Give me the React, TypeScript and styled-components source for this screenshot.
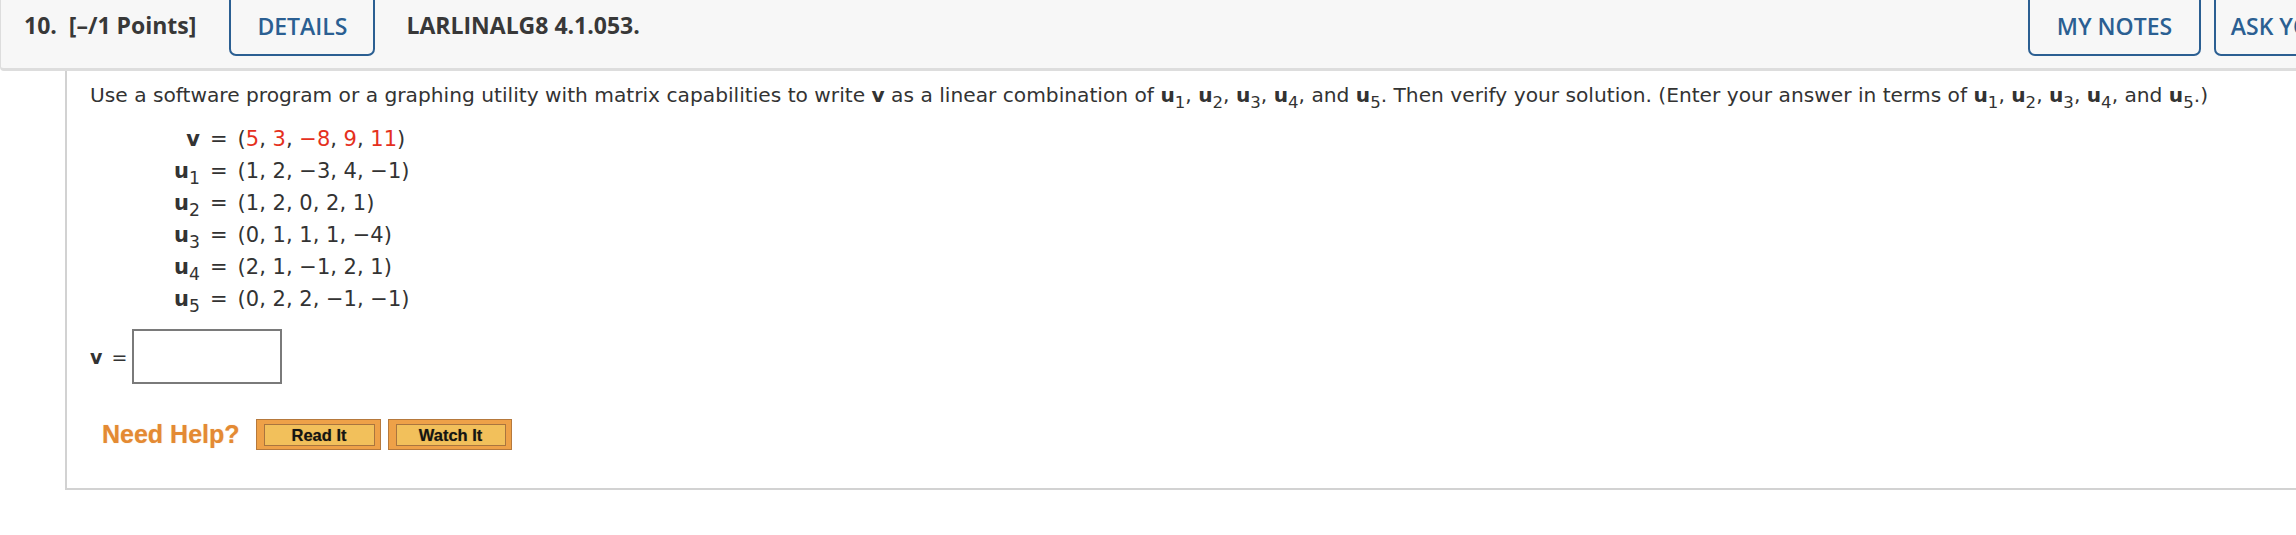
import React from 'react';
import styled, { createGlobalStyle } from 'styled-components';

const GlobalStyle = createGlobalStyle`
  html, body {
    margin: 0;
    padding: 0;
    background: #ffffff;
    overflow: hidden;
  }
`;

const Page = styled.div`
  width: 2480px;
  height: 535px;
  font-family: 'DejaVu Sans', Verdana, sans-serif;
  color: #333333;
`;

const Header = styled.header`
  display: flex;
  align-items: flex-start;
  box-sizing: border-box;
  height: 77px;
  margin-top: -6px;
  padding: 0 13px 0 23px;
  background: #f7f7f7;
  border: 1px solid #dddddd;
  border-bottom: 3px solid #dddddd;
  border-radius: 0 0 4px 4px;
  font-family: 'Open Sans', 'Noto Sans', sans-serif;
`;

const HeaderTitle = styled.div<{ $gap: number }>`
  display: flex;
  align-items: center;
  height: 60px;
  margin-right: ${p => p.$gap}px;
  font-size: 23px;
  font-weight: 700;
  color: #383838;
  white-space: pre;
`;

const HeaderButton = styled.button<{ $width: number }>`
  box-sizing: border-box;
  width: ${p => p.$width}px;
  height: 61px;
  padding: 1px 0 0;
  background: transparent;
  border: 2px solid #2b5f92;
  border-radius: 0 0 7px 7px;
  font-family: 'Open Sans', 'Noto Sans', sans-serif;
  font-size: 23px;
  font-weight: 600;
  color: #2b5f92;
  text-transform: uppercase;
  white-space: nowrap;
  cursor: pointer;
`;

const RightGroup = styled.div`
  display: flex;
  gap: 13px;
  margin-left: auto;
`;

const Content = styled.section`
  box-sizing: border-box;
  height: 419px;
  margin-left: 65px;
  padding: 10px 0 0 23px;
  border-left: 2px solid #d2d2d2;
  border-bottom: 2px solid #d2d2d2;
`;

const Prompt = styled.p`
  margin: 0;
  font-size: 20.2px;
  line-height: 28px;
  white-space: nowrap;
`;

const Bold = styled.b`
  font-weight: 700;
`;

const Sub = styled.sub`
  font-size: 0.82em;
  font-weight: 400;
  vertical-align: -0.36em;
  line-height: 0;
`;

const VectorTable = styled.div`
  display: grid;
  grid-template-columns: 40px auto auto;
  justify-content: start;
  column-gap: 10px;
  margin: 14px 0 0 70px;
  font-size: 21px;
`;

const Cell = styled.div<{ $align?: string }>`
  height: 32px;
  line-height: 32px;
  text-align: ${p => p.$align || 'left'};
  white-space: nowrap;
`;

const Red = styled.span`
  color: #e5301d;
`;

const AnswerRow = styled.div`
  display: flex;
  align-items: center;
  gap: 9px;
  margin-top: 14px;
  font-size: 19px;
`;

const AnswerInput = styled.input`
  box-sizing: border-box;
  width: 150px;
  height: 55px;
  margin-left: -4px;
  border: 2px solid #7a7a7a;
  outline: none;
  background: #ffffff;
`;

const HelpRow = styled.div`
  display: flex;
  align-items: center;
  gap: 7px;
  margin: 35px 0 0 12px;
`;

const HelpLabel = styled.span`
  margin-right: 9px;
  font-family: 'Liberation Sans', Arial, sans-serif;
  font-size: 25px;
  font-weight: 700;
  color: #e48a33;
  text-shadow: 0 0 1px rgba(228, 138, 51, 0.5);
`;

const HelpButton = styled.button<{ $width: number }>`
  box-sizing: border-box;
  width: ${p => p.$width}px;
  height: 31px;
  padding: 4px 5px 3px 7px;
  background: #eea148;
  border: 1px solid #b6793c;
  cursor: pointer;
`;

const HelpFace = styled.span`
  display: flex;
  align-items: center;
  justify-content: center;
  box-sizing: border-box;
  height: 100%;
  background: #f2c05b;
  border: 1px solid #a9753f;
  font-family: 'Liberation Sans', Arial, sans-serif;
  font-size: 16.5px;
  font-weight: 700;
  color: #141414;
  text-shadow: 0 0 1px rgba(0, 0, 0, 0.4);
`;

type Vec = { name: string; sub?: string; values: string[]; red?: boolean };

const VECTORS: Vec[] = [
  { name: 'v', values: ['5', '3', '\u22128', '9', '11'], red: true },
  { name: 'u', sub: '1', values: ['1', '2', '\u22123', '4', '\u22121'] },
  { name: 'u', sub: '2', values: ['1', '2', '0', '2', '1'] },
  { name: 'u', sub: '3', values: ['0', '1', '1', '1', '\u22124'] },
  { name: 'u', sub: '4', values: ['2', '1', '\u22121', '2', '1'] },
  { name: 'u', sub: '5', values: ['0', '2', '2', '\u22121', '\u22121'] },
];

const U = ({ n }: { n: string }) => (
  <>
    <Bold>u</Bold>
    <Sub>{n}</Sub>
  </>
);

const UList = () => (
  <>
    <U n="1" />, <U n="2" />, <U n="3" />, <U n="4" />, and <U n="5" />
  </>
);

export default function App() {
  return (
    <Page>
      <GlobalStyle />
      <Header>
        <HeaderTitle $gap={33}>10.  [–/1 Points]</HeaderTitle>
        <HeaderButton $width={146}>Details</HeaderButton>
        <HeaderTitle $gap={0} style={{ marginLeft: 31 }}>LARLINALG8 4.1.053.</HeaderTitle>
        <RightGroup>
          <HeaderButton $width={173}>My Notes</HeaderButton>
          <HeaderButton $width={252}>Ask Your Teacher</HeaderButton>
        </RightGroup>
      </Header>

      <Content>
        <Prompt>
          Use a software program or a graphing utility with matrix capabilities to write <Bold>v</Bold> as a
          linear combination of <UList />. Then verify your solution. (Enter your answer in terms of <UList />.)
        </Prompt>

        <VectorTable>
          {VECTORS.map((vec, i) => (
            <React.Fragment key={i}>
              <Cell $align="right">
                <Bold>{vec.name}</Bold>
                {vec.sub && <Sub>{vec.sub}</Sub>}
              </Cell>
              <Cell>=</Cell>
              <Cell>
                (
                {vec.values.map((val, j) => (
                  <React.Fragment key={j}>
                    {vec.red ? <Red>{val}</Red> : val}
                    {j < vec.values.length - 1 && ', '}
                  </React.Fragment>
                ))}
                )
              </Cell>
            </React.Fragment>
          ))}
        </VectorTable>

        <AnswerRow>
          <Bold>v</Bold>
          <span>=</span>
          <AnswerInput type="text" aria-label="v" />
        </AnswerRow>

        <HelpRow>
          <HelpLabel>Need Help?</HelpLabel>
          <HelpButton $width={125}>
            <HelpFace>Read It</HelpFace>
          </HelpButton>
          <HelpButton $width={124}>
            <HelpFace>Watch It</HelpFace>
          </HelpButton>
        </HelpRow>
      </Content>
    </Page>
  );
}
